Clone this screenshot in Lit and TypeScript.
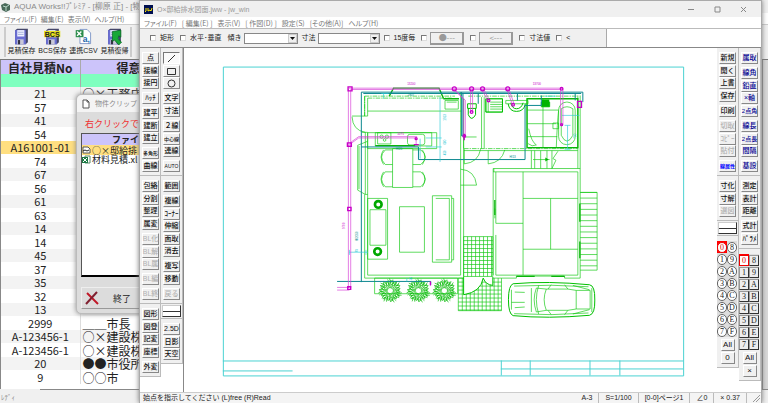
import { LitElement, html, svg, css } from "lit";
import { customElement } from "lit/decorators.js";
import { classMap } from "lit/directives/class-map.js";

type Tool = { t: string; k?: string };
const T = (s: string, k = ""): Tool[] => s.split(" ").map((t) => ({ t, k }));

const LEFT_A: Tool[][][] = [
  [T("点 接線 接円"), T("ﾊｯﾁ"), T("建平 建断 建立"), [{ t: "多角形", k: "tiny" }, { t: "曲線" }]],
  [T("包絡 分割 整理 属変"), T("BL化 BL解 BL属", "off"), T("BL編", "off"), T("BL終", "off")],
  [T("図形 図登 記変 座標"), T("外変")],
];
const LEFT_B1: Tool[][] = [
  [{ t: "／", k: "line down" }, { t: "□", k: "rect" }, { t: "○", k: "circle" }],
  T("文字 寸法"),
  [{ t: "２線" }, { t: "中心線", k: "tiny" }, { t: "連線" }],
  T("AUTO", "tiny"),
];
const LEFT_B2: Tool[][] = [T("範囲"), T("複線 ｺｰﾅｰ 伸縮 面取 消去"), T("複写 移動"), T("戻る", "off")];
const LEFT_B3: Tool[][] = [T("2.5D 日影 天空")];
const RIGHT_C: Tool[][][] = [
  [T("新規 開く 上書 保存"), T("印刷"), T("切取 ｺﾋﾟｰ 貼付", "off"), T("線属性", "tiny blue")],
  [[{ t: "寸化" }, { t: "寸解" }, { t: "選図", k: "off" }]],
];
const RIGHT_D: Tool[][][] = [
  [
    T("属取", "navy"),
    [...T("線角 鉛直 ×軸", "navy"), ...T("2点角", "navy small")],
    [{ t: "線長", k: "navy" }, { t: "2点長", k: "navy small" }, { t: "間隔", k: "navy" }],
    T("基設", "navy"),
  ],
  [T("測定 表計 距離"), T("式計 ﾊﾟﾗﾒ")],
];
const LAYERS = ["0", "8", "1", "9", "2", "A", "3", "B", "4", "C", "5", "D", "6", "E", "7", "F"];

const ROWS: [string, string][] = [
  ["21", "○×工務店"], ["57", ""], ["41", ""], ["54", ""], ["A161001-01", ""], ["74", ""], ["67", ""],
  ["56", ""], ["61", ""], ["63", ""], ["14", ""], ["14", ""], ["45", ""], ["37", ""], ["35", ""], ["32", ""],
  ["13", ""], ["2999", "＿＿市長"], ["A-123456-1", "○×建設株"], ["A-123456-1", "○×建設株"],
  ["20", "●●市役所"], ["9", "○○市"],
];

/* House plan */
const grid = (x: number, y: number, w: number, h: number, s: number) => {
  let d = `M${x} ${y}h${w}v${h}h${-w}z`;
  for (let i = s; i < w; i += s) d += `M${x + i} ${y}v${h}`;
  for (let j = s; j < h; j += s) d += `M${x} ${y + j}h${w}`;
  return d;
};
const shrub = (cx: number, cy: number) => {
  let d = "";
  for (let i = 0; i < 22; i++) {
    const a = (i * Math.PI * 2) / 22;
    const r = 31 + ((i * 5) % 3) * 3;
    const p = (q: number, o: number) =>
      `${Math.round(cx + Math.cos(a + o) * q)} ${Math.round(cy + Math.sin(a + o) * q)}`;
    d += `M${p(8, 0.3)}L${p(r * 0.5, 0)}L${p(r * 0.7, 0.2)}L${p(r, 0.1)}M${p(r * 0.7, 0.2)}L${p(r * 0.9, 0.34)}M${p(r * 0.5, 0)}L${p(r * 0.8, -0.12)}M${p(r * 0.75, 0)}L${p(r * 0.95, -0.1)}`;
  }
  return d;
};
const steps = () => {
  let d = "M737 352h51v234h-51";
  for (let y = 369; y < 586; y += 17) d += `M737 ${y}h51`;
  return d;
};

@customElement("plan-sheet")
export class PlanSheet extends LitElement {
  static styles = css`
    :host { display: block; min-width: 0; min-height: 0; }
    svg { display: block; width: 100%; height: 100%; }
    .frame { fill: none; stroke: #4ad2d2; stroke-width: 1; }
    .g { fill: none; stroke: #10c810; stroke-width: 2; }
    .gb { fill: none; stroke: #0ab40a; stroke-width: 4; }
    .gs { fill: none; stroke: #00c000; stroke-width: 3; }
    .gl { fill: none; stroke: #00b800; stroke-width: 2; }
    .gf { fill: #00b400; }
    .m { fill: none; stroke: #d63cd6; stroke-width: 2; }
    .mc { fill: none; stroke: #c800c8; stroke-width: 4; }
    .t { fill: none; stroke: #0c8890; stroke-width: 3; }
    .c { fill: none; stroke: #30cdd8; stroke-width: 2; }
    .dash { stroke-dasharray: 14 3 4 3; }
    text { font: 9px "Liberation Sans", sans-serif; }
    .mt { fill: #c800c8; }
    .tt { fill: #088; }
    .ct { fill: #0bc; }
  `;
  render() {
    return html`<svg viewBox="183 48 535 344" role="img" aria-label="平面図">
      <path class="frame" d="M222.5 66.5H684.500V376.500H222.500zM222 361.500H684M222 371.500H292M501.500 361V376M530.500 361V376M590.500 361V376M620.500 361V376M501 369.500H684" />
      <g transform="translate(335 75) scale(.333333)">
        <path class="g dash" d="M88 62H360M97 68H350M400 62H730M387 220H730M88 62V122" />
        <path class="g" d="M97 68V122M50 122H97M50 124Q52 165 90 171M80 171H97V198L67 210V345L90 358H97M90 171V358
          M88 62V122M88 358V610H385M97 198V601H377M71 212V342M97 107H380M377 185V601M386 185V610M377 50V185M386 70V220M440 65V220M448 65V220
          M387 226H730M590 226V280M600 226V280M618 226V280M637 226V280M652 226V280M595 253H645M670 228L655 250L664 255L652 280
          M475 280H737M475 290H730V601H483V480M483 290V400M477 280V290M475 280V601M565 290V601M483 445H565M565 370H730M648 370V523M565 523H730
          M730 60V280M737 60V610H690V604H545V610H500M737 352H788M386 185H425M483 445V400M480 400V430
          M388 266Q430 262 437 222M388 222V266M460 226V266Q500 262 510 224M377 282Q420 285 425 330H377" />
        <path class="g" d="M330 75h40v26h-40zM335 80h30M97 172H305V220H97zM120 172h170v40h-170zM127 172h40v34h-40z
          M172 220h61v117h-61zM172 224H150Q128 245 150 268H172M145 224Q130 245 145 268M172 290H150Q128 312 150 335H172M145 290Q130 312 145 335
          M233 224H257Q285 245 257 268H233M262 224Q276 245 262 268M233 290H257Q285 312 257 335H233M262 290Q276 312 262 335" />
        <rect class="g" x="217" y="177" width="52" height="32" rx="7" />
        <circle class="g" cx="139" cy="184" r="5" /><circle class="g" cx="155" cy="184" r="5" /><circle class="g" cx="148" cy="194" r="4" />
        <path class="gb" d="M162 62L175 38H312L325 68M325 70H372M120 211H240M577 70H730V217H577zM736 385V440M736 500V550M545 605H600M650 605H690" />
        <path class="gb" d="M480 375V420" />
        <path class="g" d="M577 104H672M577 145H665M577 184H668M625 70V217M577 217V70M582 160Q590 200 605 209Q592 216 580 205
          M672 105Q668 140 665 217M655 143h17v17h-17zM453 70h50v40h-50zM460 70V110M466 80H503M466 87H503M466 94H503M466 101H503M513 75h67v10h-67z" />
        <path class="gs" d="M453 70h50v40h-50zM520 85Q524 108 545 108Q568 108 572 85M528 82Q532 100 545 100Q560 100 565 82" />
        <rect class="g" x="672" y="80" width="50" height="128" rx="24" /><path class="g" d="M680 180V100Q697 88 715 100V180Q697 215 680 180" />
        <path class="gs" d="M398 85h26v14h-26zM400 99V118Q410 140 422 118V99M620 80h25v14h-25z" /><path class="gf" d="M622 72h22v22h-22zM632 247l10 6-10 6z" />
        <path class="g" d=${grid(386, 485, 88, 120, 12)} /><path class="g" d=${grid(370, 610, 130, 98, 12)} />
        <path d="M386 607H474V632Q452 630 445 610Q438 652 386 660Z" fill="#fff" />
        <path class="gs" d="M386 607V660Q438 652 445 610Q452 630 474 632V607" />
        <path class="g" d="M97 370h60v183h-60zM104 404h48v107h-48zM193 395h75v137h-75zM292 362h58v200h-58zM302 370h41v185h-41M350 370h6v185h-6M118 610h250v47h-250z" />
        <circle cx="129" cy="388" r="10" fill="none" stroke="#00a800" stroke-width="8" /><circle cx="127" cy="530" r="10" fill="none" stroke="#00a800" stroke-width="8" />
        <path class="g" d=${steps()} />
        <path class="gl" d=${shrub(165, 648)} /><path class="gl" d=${shrub(250, 648)} /><path class="gl" d=${shrub(328, 648)} />
        <path class="gs" d="M535 627Q640 618 765 630Q782 632 781 676Q782 718 765 722Q640 733 535 723Q521 718 521 675Q521 632 535 627z" />
        <path class="g" d="M538 634Q650 628 762 636M538 717Q650 724 762 715M605 640Q592 675 605 712M635 643Q622 675 635 707M605 640L635 643H700M605 712L635 707H700M530 645V705" />
        <path class="g" d="M540 652L570 653M530 683L570 683M540 699L570 697M590 640V712M612 632Q598 675 612 718M725 647h42v56h-42zM700 643L725 647M700 707L725 703M772 640V712M650 630L640 643M690 630L700 643M650 720L640 707M690 720L700 707M715 632L765 645M715 718L765 705" />
        <path class="t" d="M78 622V50H745V80M84 54H740M5 620H287V630M78 215H250V253H571V90H620M380 50V182H392M384 54V182M430 54V85M548 54V75M620 60V90M722 54V75" />
        <path class="c" d="M315 65V260M272 188H320M272 215H320M255 190V250M682 120H735M699 150V222M690 150H708M690 222H708M42 532H98M42 525V540M92 525V540M215 610V620M630 62H665M145 54V70M138 54H160" />
        <path class="m" d="M40 38H685M46 42H679M39 40V640M46 42V640M5 638H42M5 646H42M42 208L70 188H243V210M42 204L70 184H246M358 40L386 72V180M358 44L391 74V180M407 40V110M413 40V110M440 40L458 75M446 40L464 75M516 40L533 88M522 40L539 88M678 40V148M685 40V148" />
        <path class="mc" d="M38 34h12v12h-12zM36 203h12v10h-12zM37 397h10v10h-10zM37 636h9v8h-9zM729 78h12v18h-12zM286 620V632M236 208h15M388 175V195" />
        <circle class="mc" cx="358" cy="40" r="6" /><circle class="mc" cx="410" cy="40" r="6" /><circle class="mc" cx="443" cy="40" r="6" /><circle class="mc" cx="519" cy="40" r="6" /><circle class="mc" cx="681" cy="40" r="4" />
        <circle class="mc" cx="410" cy="110" r="4" /><circle class="mc" cx="461" cy="75" r="4" /><circle class="mc" cx="535" cy="88" r="4" /><circle class="mc" cx="681" cy="148" r="3" /><circle class="mc" cx="243" cy="190" r="3" /><circle class="mc" cx="388" cy="182" r="4" />
        <text class="mt" x="216" y="29">13200</text><text class="mt" x="594" y="29">13700</text><text class="mt" x="186" y="179">1075</text>
        <text class="tt" x="217" y="62">2807</text><text class="tt" x="182" y="224">HI20</text><text class="tt" x="524" y="247">HI13</text>
        <text class="mt" transform="translate(30 462) rotate(-90)">9700</text><text class="tt" transform="translate(68 498) rotate(-90)">HI2050</text>
        <text class="ct" transform="translate(334 136) rotate(-90)">1913</text><text class="ct" transform="translate(334 208) rotate(-90)">680</text><text class="ct" transform="translate(334 240) rotate(-90)">450</text>
        <text class="ct" x="58" y="530">42</text><text class="ct" x="222" y="616">HI</text><text class="ct" transform="translate(723 190) rotate(-90)">750</text>
      </g>
    </svg>`;
  }
}

const aquaIcon = (kind: string) => svg`
  ${kind === "csv"
    ? svg`<path d="M7 2h10l5 5v15H7z" fill="#fff" stroke="#5878b8"/><path d="M1 3h11v10H1z" fill="#2c8c4c"/><path d="M3 5l6 6M9 5l-6 6" stroke="#fff" stroke-width="2"/><text x="11" y="20" class="ic">a,</text>`
    : svg`<path d="M3 3L6 1H21V20L18 23H3z" fill="#44466a"/><path d="M3 3H18V23H3z" fill="#6a6ed4"/><path d="M6 3H16V12H6z" fill="#eef0ff"/><path d="M7 6H15M7 9H15" stroke="#8a9ad0"/><path d="M6 16H15V23H6z" fill="#c8c8d8"/><path d="M7 17H10V23H7z" fill="#334"/>`}
  ${kind === "bcs" ? svg`<path d="M0 4H23V13H0z" fill="#e8e020"/><text x="1" y="12" class="bcs">BCS</text>` : ""}
  ${kind === "back" ? svg`<path d="M9 5L21 3V13L18 11L17 15L22 20L18 24L12 17L9 19z" fill="#18a838" stroke="#086020"/>` : ""}`;

@customElement("app-root")
export class AppRoot extends LitElement {
  static styles = css`
    * { box-sizing: border-box; }
    :host {
      display: block; position: relative; height: 100vh; overflow: hidden; background: #f0f0f0; color: #222;
      font: 7px/10px "Liberation Sans", "Noto Sans CJK JP", sans-serif; white-space: nowrap;
    }
    button, input, select { font: inherit; color: inherit; margin: 0; padding: 0; border-radius: 0; }
    .back { height: 100%; display: flex; flex-direction: column; }
    .title { display: flex; align-items: center; color: #8a8a8a; background: #f0f0f0; }
    .back .title { height: 13px; padding-left: 1px; gap: 4px; font-size: 8px; }
    .title svg { flex: none; }
    .menu { display: flex; background: #fff; color: #777; align-items: center; font-family: "Noto Sans CJK JP", sans-serif; font-feature-settings: "palt"; }
    .menu a { color: inherit; text-decoration: none; }
    .back .menu { height: 11px; padding-left: 4px; gap: 4px; }
    .tools { height: 36px; border-top: 1px solid #ccc; display: flex; align-items: center; padding-left: 4px; border-bottom: 1px solid #777; }
    .tools button { width: 31px; border: 0; background: none; display: flex; flex-direction: column; align-items: center; gap: 1px; overflow: visible; }
    .grip { width: 2px; height: 30px; border: 1px solid #ccc; border-bottom: 0; border-top: 0; }
    .ic { font: bold 12px "Liberation Sans"; fill: #26a; }
    .bcs { font: bold 10px "Liberation Sans"; fill: #222; }
    .data { flex: 1; min-height: 0; display: flex; background: #fff; border-left: 1px solid #888; }
    .list { border-collapse: collapse; width: 100%; table-layout: fixed; align-self: flex-start; font: 11px/13px "Noto Sans CJK JP", sans-serif; }
    .list th { height: 14px; padding: 0; background: #ccc4fa; border-right: 1px solid #aaa; font-size: 12px; font-weight: 700; line-height: 13px; }
    .list .no { width: 79px; }
    .list .cust { text-align: left; padding-left: 36px; }
    .list .filter td { height: 13px; background: #7fffbf; border-right: 1px solid #aaa; }
    .list td { padding: 0; height: 13px; text-align: center; border-right: 1px solid #ddd; }
    .list td + td { text-align: left; padding-left: 2px; font-size: 12px; }
    .list tbody tr:nth-child(even) td { height: 14px; }
    .list tbody tr:nth-child(odd) td { background: #f3f3f3; }
    .list tbody tr.cur td { background: #ffdf80; }
    .bar { flex: none; width: 6px; background: #d8d8d8; border-left: 1px solid #888; }
    .foot { height: 13px; padding: 3px 0 0 1px; color: #888; }
    .hs { height: 1px; background: #888; margin-left: 40px; }

    .clip { position: absolute; left: 76px; top: 94px; width: 210px; height: 220px; border: 1px solid #bbb; border-radius: 5px; background: #dcdcdc; display: flex; flex-direction: column; box-shadow: 0 0 5px #888; }
    .clip .title { height: 17px; background: #f4f4f4; padding-left: 5px; gap: 5px; border-radius: 5px 5px 0 0; }
    .clip p { margin: 6px 0 4px 8px; color: #f03030; font: 9px/11px "Noto Sans CJK JP", sans-serif; }
    .files { margin: 0 4px; flex: 1; background: #fff; border: 1px solid #555; border-bottom: 2px solid #000; font: 9px/9px "Noto Sans CJK JP", sans-serif; }
    .files b { display: block; height: 11px; line-height: 11px; padding-left: 30px; background: #ccc4fa; }
    .file { display: flex; align-items: center; gap: 1px; height: 9px; }
    .file.on { background: #ffdf80; height: 10px; }
    .end { margin: 10px 4px 4px; height: 22px; border: 1px solid #aaa; border-color: #eee #999 #999 #eee; background: #dcdcdc; display: flex; align-items: center; gap: 14px; padding-left: 3px; font: 9px "Noto Sans CJK JP", sans-serif; }

    .jw { position: absolute; inset: 0 6px 0 139px; border: 1px solid #aaa; border-bottom: 0; background: #fff; display: flex; flex-direction: column; box-shadow: 0 0 5px #777; }
    .jw > .title { height: 16px; padding: 1px 10px 0 4px; gap: 4px; color: #999; }
    .grow { flex: 1; }
    .win { width: 16px; height: 10px; border: 0; background: none; display: grid; place-items: center; }
    .caps { display: flex; gap: 10px; }
    .jw .menu { height: 12px; padding-left: 4px; gap: 5px; border-bottom: 1px solid #bbb; color: #777; }
    .opts { height: 19px; display: flex; border-bottom: 1px solid #888; }
    .opts form { width: 467px; background: #f0f0f0; border-right: 1px solid #aaa; display: flex; align-items: center; padding-left: 10px; }
    .opts label { display: flex; align-items: center; gap: 4px; margin-right: 6px; }
    .opts .drop { gap: 2px; margin-right: 4px; }
    .opts input { appearance: none; width: 6px; height: 6px; border: 1px solid #777; border-color: #777 #ddd #ddd #777; background: #fff; }
    .sel { position: relative; display: flex; width: 54px; }
    .sel.wide { width: 62px; }
    .opts select { appearance: none; width: 100%; height: 11px; border: 1px solid #888; background: #fff; }
    .sel svg { position: absolute; right: 1px; top: 1px; background: #f0f0f0; border: 1px solid #ccc; }
    .opts form button { width: 34px; height: 13px; border: 1px solid #999; background: #f0f0f0; color: #999; border-width: 1px 2px 2px 1px; font: 8px/10px "Noto Sans CJK JP", sans-serif; margin-right: 6px; }
    .opts .solo { margin-right: 3px; }
    .work { flex: 1; min-height: 0; display: flex; background: #fff; }
    .work plan-sheet { flex: 1; border-left: 1px solid #888; }
    .col { width: 22px; flex: none; }
    .left { width: 21px; }
    .sec { background: #f0f0f0; border-bottom: 1px solid #bbb; border-right: 1px solid #bbb; padding: 4px 2px 3px; display: flex; flex-direction: column; gap: 3px; }
    .sec.plain { padding: 1px; }
    .grp { display: flex; flex-direction: column; }
    .grp button:nth-child(even) { margin-top: 1px; }
    .tb { width: 17px; height: 12px; border: 1px solid #888; border-color: #fff #888 #888 #fff; background: #f0f0f0; display: flex; justify-content: center; align-items: center; line-height: 10px; color: #111; font-weight: 500; }
    .off { color: #b0b0b0; }
    .navy { color: #000090; }
    .blue { color: #0000ff; font-weight: 700; }
    .tiny { font-size: 5px; }
    .small { font-size: 6px; }
    .down { background: #fafafa; border-color: #777 #fff #fff #777; }
    .pen { height: 12px; background: #fff; border: 1px solid #888; border-color: #ccc #333 #333 #ccc; padding-top: 5px; }
    .pen i { display: block; height: 1px; background: #333; }
    .lay { display: grid; grid-template-columns: 10px 10px; padding: 5px 0 2px; background: #f0f0f0; border-right: 1px solid #bbb; }
    .lay button { height: 12px; border: 0; padding: 0; background: #ddd; font: 8px/10px "Liberation Serif", serif; display: grid; place-items: center; }
    .lay span { width: 10px; height: 11px; border: 1px solid #666; border-radius: 5px; line-height: 9px; background: #fff; }
    .lay.sq span { border-radius: 0; border-color: #999 #333 #333 #999; background: #eee; }
    .lay button.sel0 { background: #f00; color: #d00; }
    .lay button.sel0 span { border-color: #e00; background: #fff; }
    .all { background: #f0f0f0; border-bottom: 1px solid #bbb; border-right: 1px solid #bbb; display: flex; flex-direction: column; align-items: center; gap: 1px; padding-bottom: 3px; }
    .all .tb { width: 14px; font-size: 8px; }
    .status { height: 11px; background: #f4f4f4; border-top: 1px solid #ccc; display: flex; align-items: center; padding-left: 3px; }
    .status span { border-right: 1px solid #bbb; padding-right: 6px; margin-right: 6px; }
    .status svg { margin-right: 1px; }
  `;

  tool(b: Tool) {
    const k = b.k ?? "";
    const shape = k.startsWith("line")
      ? svg`<path d="M2 8L9 1"/>`
      : k === "rect"
        ? svg`<path d="M1.500 1.500H9.500V7.500H1.500z"/>`
        : k === "circle"
          ? svg`<circle cx="5.500" cy="4.500" r="3.500"/>`
          : null;
    return html`<button class="tb ${k}" aria-label=${b.t} ?disabled=${k === "off"}>
      ${shape ? html`<svg width="11" height="9" fill="none" stroke="#333">${shape}</svg>` : b.t}
    </button>`;
  }
  sec(groups: Tool[][]) {
    return html`<div class="sec">${groups.map((g) => html`<div class="grp">${g.map((b) => this.tool(b))}</div>`)}</div>`;
  }
  layers(sq: boolean) {
    return html`<div class=${classMap({ lay: true, sq })}>
      ${LAYERS.map((l) => html`<button class=${classMap({ sel0: l === "0" })}><span>${l}</span></button>`)}
    </div>`;
  }
  menu(items: string[]) {
    return html`<nav class="menu">${items.map((m) => html`<a href="#">${m}</a>`)}</nav>`;
  }
  pen() {
    return html`<div class="sec plain"><div class="pen"><i></i></div></div>`;
  }

  render() {
    return html`
      <section class="back">
        <div class="title">
          <svg width="9" height="10" viewBox="0 0 9 10"><path d="M0 3L4 1L9 3V8L5 10L1 8z" fill="#486858" /><path d="M2 4L5 5L8 3M5 5V9" stroke="#b8d8c8" fill="none" /></svg>
          <span>AQUA Works!!ﾌﾟﾚﾐｱ - [柳原 正] - [物</span>
        </div>
        ${this.menu(["ファイル(F)", "編集(E)", "表示(V)", "ヘルプ(H)"])}
        <div class="tools">
          <i class="grip"></i>
          ${[["save", "見積保存"], ["bcs", "BCS保存"], ["csv", "連携CSV"], ["back", "見積復帰"]].map(
            ([k, t]) => html`<button><svg width="17" height="17" viewBox="0 0 24 24">${aquaIcon(k)}</svg>${t}</button>`)}
          <i class="grip"></i>
        </div>
        <div class="data">
          <table class="list">
            <thead>
              <tr><th class="no">自社見積No</th><th class="cust">得意</th></tr>
              <tr class="filter"><td></td><td></td></tr>
            </thead>
            <tbody>${ROWS.map(([n, c]) => html`<tr class=${classMap({ cur: n === "A161001-01" })}><td>${n}</td><td>${c}</td></tr>`)}</tbody>
          </table>
          <div class="bar"></div>
        </div>
        <div class="hs"></div>
        <div class="foot">ﾚﾃﾞｨ</div>
      </section>

      <section class="clip">
        <div class="title">
          <svg width="8" height="10" viewBox="0 0 8 10"><path d="M1 1H5L7 3V9H1zM5 1V3H7" fill="#fff" stroke="#555" /></svg>
          <span>物件クリップ</span>
        </div>
        <p>右クリックで</p>
        <div class="files">
          <b>ファイ</b>
          <div class="file on"><svg width="9" height="8"><path d="M1 1H6L8 3V7H1z" fill="#fff" stroke="#555" /><path d="M1 5L3 4L5 5L7 4" stroke="#222" fill="none" /></svg>○×邸給排</div>
          <div class="file"><svg width="9" height="9"><path d="M3 1H8V8H3z" fill="#fff" stroke="#5a8a6a" /><path d="M0 2H6V8H0z" fill="#1c7a44" /><path d="M1 3L5 7M5 3L1 7" stroke="#fff" /></svg>材料見積.xl</div>
        </div>
        <button class="end"><svg width="14" height="14"><path d="M2 2L13 13" stroke="#c01828" stroke-width="2" /><path d="M12 1L1 13" stroke="#802030" stroke-width="2" /></svg>終了</button>
      </section>

      <section class="jw">
        <div class="title">
          <svg width="9" height="9"><path d="M0 0H9V9H0z" fill="#001050" /><path d="M2 3V6L1 7M4 3L4 6L6 5L7 6L8 3" stroke="#ffe800" fill="none" /></svg>
          <span>O×邸給排水図面.jww - jw_win</span>
          <span class="grow"></span>
          <div class="caps">
            <button class="win" aria-label="最小化"><svg width="7" height="7" stroke="#888"><path d="M0 3.500H6" /></svg></button>
            <button class="win" aria-label="最大化"><svg width="7" height="7" stroke="#888" fill="none"><path d="M1 1H6V6H1z" /></svg></button>
            <button class="win" aria-label="閉じる"><svg width="7" height="7" stroke="#888"><path d="M1 1L6 6M6 1L1 6" /></svg></button>
          </div>
        </div>
        ${this.menu(["ファイル(F)", "[ 編集(E) ]", "表示(V)", "[ 作図(D) ]", "設定(S)", "[その他(A)]", "ヘルプ(H)"])}
        <div class="opts">
          <form>
            <label><input type="checkbox" />矩形</label>
            <label><input type="checkbox" />水平･垂直</label>
            <label class="drop">傾き<span class="sel"><select></select><svg width="9" height="9"><path d="M1 2H6L3.500 5z" fill="#111" /></svg></span></label>
            <label class="drop">寸法<span class="sel wide"><select></select><svg width="9" height="9"><path d="M1 2H6L3.500 5z" fill="#111" /></svg></span></label>
            <label><input type="checkbox" />15度毎</label>
            <label class="solo"><input type="checkbox" aria-label="端点" /></label>
            <button type="button">●---</button>
            <label class="solo"><input type="checkbox" aria-label="矢印" /></label>
            <button type="button">&lt;---</button>
            <label><input type="checkbox" />寸法値</label>
            <label><input type="checkbox" />&lt;</label>
          </form>
        </div>
        <div class="work">
          <div class="col left">${LEFT_A.map((s) => this.sec(s))}</div>
          <div class="col">${this.sec(LEFT_B1)}${this.sec(LEFT_B2)}${this.pen()}${this.sec(LEFT_B3)}</div>
          <plan-sheet></plan-sheet>
          <div class="col">
            ${RIGHT_C.map((s) => this.sec(s))}${this.pen()}${this.layers(false)}
            <div class="all"><button class="tb">All</button><button class="tb">0</button></div>
          </div>
          <div class="col">
            ${RIGHT_D.map((s) => this.sec(s))}${this.layers(true)}
            <div class="all"><button class="tb">All</button><button class="tb">×</button></div>
          </div>
        </div>
        <div class="status">
          始点を指示してください (L)free (R)Read
          <i class="grow"></i>
          <span>A-3</span><span>S=1/100</span><span>[0-0]ページ1</span><span>∠0</span><span>× 0.37</span>
          <svg width="7" height="7" stroke="#999"><path d="M0 7L7 0M3 7L7 3" /></svg>
        </div>
      </section>
    `;
  }
}
